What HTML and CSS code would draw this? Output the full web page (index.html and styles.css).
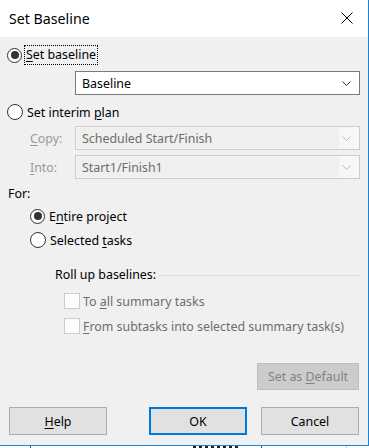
FILE: index.html
```html
<!DOCTYPE html>
<html lang="en">
<head>
    <meta charset="UTF-8">
    <title>Set Baseline</title>
    <link rel="stylesheet" href="styles.css">
</head>
<body>
    <div class="dialog">
        <div class="titlebar">
            <span class="title">Set Baseline</span>
            <svg class="close" width="12" height="12" viewBox="0 0 12 12">
                <path d="M0.5 0.5 L11.5 11.5 M11.5 0.5 L0.5 11.5" stroke="#000" stroke-width="1" fill="none"/>
            </svg>
        </div>

        <div class="content">
            <div class="row radio-row first">
                <span class="radio checked"></span>
                <span class="focus"><u>S</u>et baseline</span>
            </div>

            <div class="combo combo-main">
                <span>Baseline</span>
                <svg width="9" height="5" viewBox="0 0 9 5"><path d="M0.5 0.5 L4.5 4.5 L8.5 0.5" stroke="#333" fill="none"/></svg>
            </div>

            <div class="row radio-row interim">
                <span class="radio"></span>
                <span>Set interim <u>p</u>lan</span>
            </div>

            <div class="field copy">
                <span class="field-label"><u>C</u>opy:</span>
                <div class="combo disabled">
                    <span class="combo-text">Scheduled Start/Finish</span>
                    <svg width="9" height="5" viewBox="0 0 9 5"><path d="M0.5 0.5 L4.5 4.5 L8.5 0.5" stroke="#bcbcbc" fill="none"/></svg>
                </div>
            </div>

            <div class="field into">
                <span class="field-label"><u>I</u>nto:</span>
                <div class="combo disabled">
                    <span class="combo-text">Start1/Finish1</span>
                    <svg width="9" height="5" viewBox="0 0 9 5"><path d="M0.5 0.5 L4.5 4.5 L8.5 0.5" stroke="#bcbcbc" fill="none"/></svg>
                </div>
            </div>

            <div class="row for-label">For:</div>

            <div class="row radio-row sub entire">
                <span class="radio checked"></span>
                <span>E<u>n</u>tire project</span>
            </div>
            <div class="row radio-row sub selected">
                <span class="radio"></span>
                <span>Selected <u>t</u>asks</span>
            </div>

            <div class="row rollup">
                <span>Roll up baselines:</span>
                <span class="rule"></span>
            </div>

            <div class="row check-row check-first">
                <span class="checkbox"></span>
                <span>To <u>a</u>ll summary tasks</span>
            </div>
            <div class="row check-row check-second">
                <span class="checkbox"></span>
                <span><u>F</u>rom subtasks into selected summary task(s)</span>
            </div>

            <div class="default-row">
                <button class="btn btn-disabled">Set as <u>D</u>efault</button>
            </div>

            <div class="buttons">
                <button class="btn"><u>H</u>elp</button>
                <button class="btn btn-primary">OK</button>
                <button class="btn">Cancel</button>
            </div>
        </div>
    </div>

    <!-- window behind the dialog -->
    <div class="behind">
        <span class="grid-line gl-1"></span>
        <span class="blob"></span>
        <span class="grid-line gl-2"></span>
        <span class="grid-line gl-3"></span>
    </div>
</body>
</html>
```

FILE: styles.css
```css
/* General Styles */
body {
    margin: 0;
    padding: 0;
    width: 369px;
    height: 448px;
    overflow: hidden;
    background-color: #ffffff;
    font-family: 'Noto Sans', 'Open Sans', sans-serif;
    font-size: 12.4px;
    color: #000000;
}

u {
    text-decoration: underline;
    text-underline-offset: 2px;
}

.dialog {
    width: 368px;
    height: 445px;
    border-right: 1px solid #1883d7;
    border-bottom: 1px solid #1883d7;
    background-color: #f0f0f0;
    display: flex;
    flex-direction: column;
}

/* Title bar */
.titlebar {
    height: 37px;
    background-color: #ffffff;
    display: flex;
    align-items: center;
    justify-content: space-between;
    padding: 0 15px 0 9px;
    flex-shrink: 0;
}

.title {
    font-size: 14.2px;
    margin-top: -1px;
}

.close {
    margin-top: -1px;
}

/* Content */
.content {
    display: flex;
    flex-direction: column;
}

.row {
    height: 20px;
    display: flex;
    align-items: center;
}

.radio-row {
    padding-left: 7px;
    gap: 4px;
}

.radio {
    width: 14px;
    height: 14px;
    border: 1px solid #333333;
    border-radius: 50%;
    background-color: #ffffff;
    display: flex;
    align-items: center;
    justify-content: center;
    flex-shrink: 0;
}

.radio.checked {
    border-width: 1.5px;
    width: 13px;
    height: 13px;
}

.radio.checked::after {
    content: "";
    width: 8px;
    height: 8px;
    border-radius: 50%;
    background-color: #333333;
}

.first {
    margin-top: 8px;
}

.focus {
    outline: 1px dotted #000000;
    outline-offset: 0;
    padding: 0 1px;
    margin-left: -1px;
    line-height: 18px;
}

/* Combo boxes */
.combo {
    height: 24px;
    box-sizing: border-box;
    border: 1px solid #7a7a7a;
    background-color: #ffffff;
    display: flex;
    align-items: center;
    justify-content: space-between;
    padding: 0 8px 0 6px;
    width: 285px;
}

.combo-main {
    margin: 6px 0 0 75px;
}

.combo.disabled {
    border-color: #cccccc;
    background-color: #f7f7f7;
    padding: 1px 8px 1px 1px;
    color: #6d6d6d;
}

.combo-text {
    background-color: #efefef;
    align-self: stretch;
    display: flex;
    align-items: center;
    width: 257px;
    padding-left: 5px;
}

.interim {
    margin-top: 7px;
}

.field {
    display: flex;
    align-items: center;
}

.field-label {
    width: 45px;
    padding-left: 30px;
    color: #9a9a9a;
}

.copy {
    margin-top: 4px;
}

.into {
    margin-top: 5px;
}

.for-label {
    margin-top: 4px;
    padding-left: 8px;
}

.sub {
    padding-left: 30px;
}

.entire {
    margin-top: 3px;
}

.selected {
    margin-top: 4px;
}

/* Roll up group */
.rollup {
    margin-top: 14px;
    padding: 0 9px 0 55px;
    gap: 3px;
}

.rule {
    flex: 1;
    height: 1px;
    background-color: #dcdcdc;
    margin-top: 2px;
}

.check-row {
    padding-left: 64px;
    gap: 3px;
    color: #6d6d6d;
}

.checkbox {
    width: 14px;
    height: 14px;
    border: 1px solid #cccccc;
    background-color: #fcfcfc;
    flex-shrink: 0;
}

.check-first {
    margin-top: 7px;
}

.check-second {
    margin-top: 5px;
}

/* Buttons */
.btn {
    font-family: inherit;
    font-size: 12.4px;
    height: 28px;
    width: 98px;
    box-sizing: border-box;
    border: 1px solid #adadad;
    background-color: #e1e1e1;
    color: #000000;
    padding: 0;
    margin: 0;
}

.btn-disabled {
    height: 27px;
    width: 102px;
    border-color: #bfbfbf;
    background-color: #cccccc;
    color: #838383;
}

.btn-primary {
    border: 2px solid #0078d7;
}

.default-row {
    display: flex;
    justify-content: flex-end;
    padding-right: 9px;
    margin-top: 27px;
}

.buttons {
    display: flex;
    justify-content: space-between;
    padding: 0 9px;
    margin-top: 17px;
}

.buttons .btn:nth-child(2) {
    margin-left: 42px;
}

.buttons .btn:nth-child(3) {
    margin-left: 14px;
}

/* Window behind */
.behind {
    height: 2px;
    display: flex;
    align-items: stretch;
}

.grid-line {
    width: 1px;
    background-color: #444444;
}

.gl-1 {
    margin-left: 30px;
}

.blob {
    width: 48px;
    margin-left: 162px;
    background: repeating-linear-gradient(90deg, #222 0 3px, #fff 3px 6px);
}

.gl-2 {
    margin-left: 20px;
}

.gl-3 {
    margin-left: 84px;
    background-color: #cccccc;
}
```
